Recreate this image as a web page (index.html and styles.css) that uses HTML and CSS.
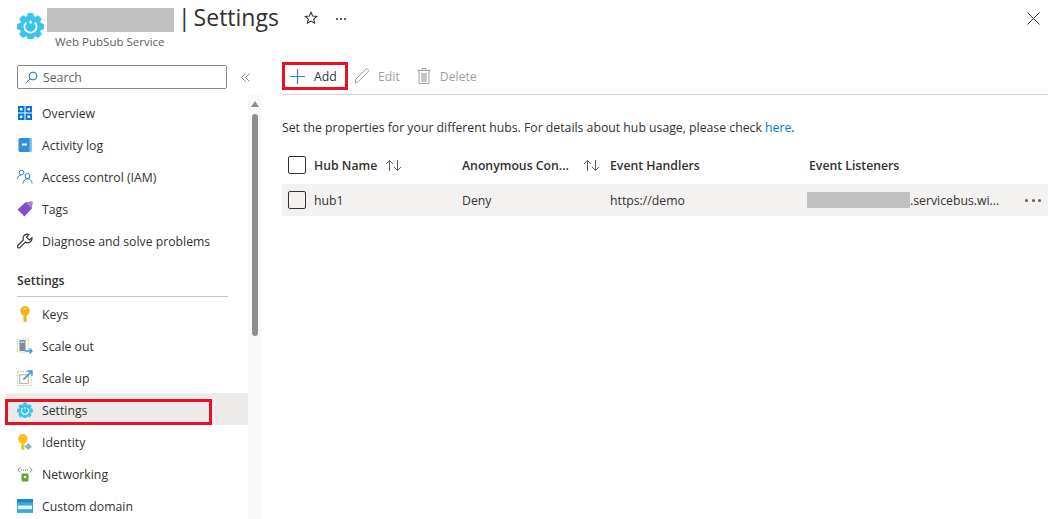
FILE: index.html
```html
<!DOCTYPE html>
<html lang="en">
<head>
  <meta charset="UTF-8" />
  <title>Settings - Web PubSub Service</title>
  <link rel="stylesheet" href="styles.css">
</head>
<body>
  <svg class="defs" width="0" height="0">
    <symbol id="gear" viewBox="0 0 28 28">
      <path fill="#37c5f0" stroke="#37c5f0" stroke-width="1" stroke-linejoin="round" d="M11.600 1.500h4.800l.7 3.100 2.100.9 2.700-1.700 3.400 3.400-1.700 2.700.9 2.100 3.100.7v4.800l-3.100.7-.9 2.100 1.700 2.700-3.400 3.400-2.700-1.700-2.100.9-.7 3.100h-4.800l-.7-3.100-2.100-.9-2.700 1.700-3.400-3.400 1.700-2.700-.9-2.100-3.100-.7v-4.800l3.100-.7.9-2.100-1.700-2.700 3.400-3.400 2.700 1.700 2.100-.9z"/>
      <path fill="none" stroke="#fff" stroke-width="2" stroke-linecap="round" d="M9 11.500a6.200 6.200 0 1 0 10 0"/>
      <path fill="#fff" d="M13 9h2.200v3H13z"/>
    </symbol>
    <symbol id="sort" viewBox="0 0 17 13">
      <path fill="none" stroke="#605e5c" stroke-width="1" d="M4.500 12V1.500M1 5l3.500-3.500L8 5M12.500 1v10.500M9 8l3.500 3.500L16 8"/>
    </symbol>
  </svg>

  <header class="top-bar">
    <svg class="res-icon"><use href="#gear"/></svg>
    <div class="title-block">
      <div class="title-line">
        <span class="redact redact-title"></span>
        <h1>| Settings</h1>
        <svg class="star" viewBox="0 0 14 14"><path fill="none" stroke="#323130" stroke-width="1.100" d="M7 1.300l1.700 3.800 4 .4-3 2.700.9 4L7 10.100l-3.600 2.100.9-4-3-2.700 4-.4z"/></svg>
        <span class="more-top"><i></i><i></i><i></i></span>
      </div>
      <div class="subtitle">Web PubSub Service</div>
    </div>
    <svg class="close" viewBox="0 0 13 13"><path stroke="#323130" stroke-width="1" d="M.5.5l12 12M12.500.5l-12 12"/></svg>
  </header>

  <div class="content">
    <aside class="sidebar">
      <div class="search-row">
        <div class="search">
          <svg class="search-icon" viewBox="0 0 13 13"><circle cx="8" cy="5" r="3.900" fill="none" stroke="#0078d4"/><path stroke="#0078d4" d="M5.200 7.800L.8 12.200"/></svg>
          <span>Search</span>
        </div>
        <svg class="collapse" viewBox="0 0 9 9"><path fill="none" stroke="#8a8886" d="M4.500.5l-4 4 4 4M8.500.5l-4 4 4 4"/></svg>
      </div>
      <div class="nav-wrap">
        <nav class="nav">
          <a class="nav-item">
            <svg class="ico-sm" viewBox="0 0 14 14"><path fill="#0078d4" d="M0 0h6.500v6.500H0zM7.500 0H14v6.500H7.500zM0 7.500h6.500V14H0zM7.500 7.500H14V14H7.500z"/><path fill="#fff" d="M2 2h2.500v2.500H2zM9.500 2H12v2.500H9.500zM2 9.500h2.500V12H2zM9.500 9.500H12V12H9.500z"/></svg>
            Overview
          </a>
          <a class="nav-item">
            <svg class="ico-sm" viewBox="0 0 14 14"><rect x=".5" width="13" height="14" rx="1.500" fill="#2f8fd8"/><rect x="11.500" width="2" height="14" fill="#7cc0ee"/><rect x="4" y="5.500" width="5" height="2" fill="#fff"/></svg>
            Activity log
          </a>
          <a class="nav-item">
            <svg viewBox="0 0 16 15"><g fill="none" stroke="#2f7fd0" stroke-width="1"><circle cx="4.500" cy="3" r="2.300"/><circle cx="10.500" cy="6.500" r="2.500"/><path d="M.5 9.500c0-2.500 1.500-3.800 3.500-3.800M6 14c0-3 2-4.700 4.500-4.700S15 11 15 14"/></g></svg>
            Access control (IAM)
          </a>
          <a class="nav-item">
            <svg viewBox="0 0 14 14"><path fill="#7f4fc9" d="M.5 7.500L7.500 1 13.500 .5 13 6.500 6.500 13.500z"/><path fill="#a67fe0" d="M7.500 1l6-.5-.5 6L9 3z"/></svg>
            Tags
          </a>
          <a class="nav-item">
            <svg viewBox="0 0 15 15"><path fill="none" stroke="#323130" stroke-width="1.100" d="M9.500 1a4 4 0 0 0-3.500 5.500L1 11.500c-.8.800-.8 1.500-.2 2.100s1.400.6 2.100-.1l5-5A4 4 0 0 0 14 4.500l-2.500 2-2.500-2.500 2-2.500c-.5-.3-1-.5-1.500-.5z"/></svg>
            Diagnose and solve problems
          </a>

          <div class="nav-heading">Settings</div>

          <a class="nav-item">
            <svg viewBox="0 0 14 15"><circle cx="7" cy="4.500" r="4.500" fill="#f9b21a"/><path fill="#f9b21a" d="M5.500 8h3v7h-1.500l-1.500-1z"/><rect x="5.500" y="1.800" width="3" height="1.500" rx=".7" fill="#fde49b"/></svg>
            Keys
          </a>
          <a class="nav-item">
            <svg viewBox="0 0 16 15"><rect x=".5" y=".5" width="11" height="13" fill="none" stroke="#b4dc92" stroke-dasharray="1.500 1"/><rect x="2.500" y="1.500" width="6" height="11" fill="#7d8a97"/><rect x="3.500" y="3" width="4" height="1.500" fill="#cfd6dc"/><path fill="none" stroke="#3b9be8" stroke-width="1.500" d="M8 12.500h7M12.500 10l2.500 2.500-2.500 2.500"/></svg>
            Scale out
          </a>
          <a class="nav-item">
            <svg viewBox="0 0 15 15"><rect x=".5" y="1.500" width="13" height="13" fill="none" stroke="#b4dc92" stroke-dasharray="1.500 1"/><rect x="2.500" y="4.500" width="8" height="8" fill="#fff" stroke="#a8b0b8"/><path fill="none" stroke="#3b9be8" stroke-width="1.500" d="M6 9l8-8M9.500 1H14v4.500"/></svg>
            Scale up
          </a>
          <a class="nav-item nav-active">
            <svg><use href="#gear"/></svg>
            Settings
            <span class="mark mark-nav"></span>
          </a>
          <a class="nav-item">
            <svg viewBox="0 0 14 15"><circle cx="5" cy="4.500" r="4.500" fill="#f9c21a"/><path fill="#f9c21a" d="M3.500 8h3v7H5l-1.500-1z"/><path fill="#7fb8dc" d="M10 8.500l3.500 3.500-3.500 3-3.500-3z"/></svg>
            Identity
          </a>
          <a class="nav-item">
            <svg viewBox="0 0 16 15"><path fill="none" stroke="#5ea0c8" d="M3.500 1L.8 3.500l2.700 2.500M12.500 1l2.700 2.500L12.500 6"/><path stroke="#5a8f2f" stroke-dasharray="1 1" d="M4 3.500h8"/><rect x="4.500" y="7" width="7" height="8" rx="1" fill="#5ea52b"/><circle cx="8" cy="10.500" r="1.300" fill="#fff"/></svg>
            Networking
          </a>
          <a class="nav-item">
            <svg viewBox="0 0 15 13"><rect width="15" height="13" fill="#3aa8e0"/><rect y="0" width="15" height="3" fill="#1f86c6"/><rect x="1" y="6" width="13" height="3.500" fill="#e4f4fc"/></svg>
            Custom domain
          </a>
        </nav>
        <div class="scrollbar">
          <span class="scroll-up"></span>
          <span class="scroll-thumb"></span>
        </div>
      </div>
    </aside>

    <main class="main">
      <div class="toolbar">
        <button class="tool tool-add">
          <svg viewBox="0 0 15 15"><path stroke="#2b88d8" stroke-width="1.200" d="M7.500 0v15M0 7.500h15"/></svg>
          Add
          <span class="mark mark-add"></span>
        </button>
        <button class="tool tool-off tool-edit">
          <svg viewBox="0 0 16 16"><path fill="none" stroke="#a19f9d" d="M1 15l1-4L11.500 1.500c.8-.8 1.800-.8 2.500-.1s.7 1.700-.1 2.500L4.500 13.500z"/></svg>
          Edit
        </button>
        <button class="tool tool-off tool-delete">
          <svg viewBox="0 0 14 16"><path fill="none" stroke="#a19f9d" d="M.5 2.500h13M5 2.500V.5h4v2M2 2.500v13h10v-13"/><path fill="#c8c6c4" d="M4 5h6v9H4z"/></svg>
          Delete
        </button>
      </div>

      <p class="intro">Set the properties for your different hubs. For details about hub usage, please check <a class="link">here</a>.</p>

      <div class="table">
        <div class="t-row t-head">
          <span class="check"></span>
          <span class="t-cell">Hub Name<svg class="sort"><use href="#sort"/></svg></span>
          <span class="t-cell">Anonymous Con...<svg class="sort sort-anon"><use href="#sort"/></svg></span>
          <span class="t-cell">Event Handlers</span>
          <span class="t-cell">Event Listeners</span>
        </div>
        <div class="t-row t-body">
          <span class="check"></span>
          <span class="t-cell">hub1</span>
          <span class="t-cell">Deny</span>
          <span class="t-cell">https://demo</span>
          <span class="t-cell t-listener"><span class="redact redact-host"></span>.servicebus.wi...</span>
          <span class="row-more"><i></i><i></i><i></i></span>
        </div>
      </div>
    </main>
  </div>
</body>
</html>
```

FILE: styles.css
```css
html, body {
  margin: 0;
  height: 519px;
  overflow: hidden;
}

body {
  font-family: "Open Sans", "Noto Sans", sans-serif;
  font-size: 12.25px;
  color: #323130;
  background-color: #fff;
}

.defs {
  position: absolute;
}

.redact {
  display: block;
  background-color: #c0c0c0;
}

.mark {
  position: absolute;
  border: 3px solid #e81123;
  box-sizing: border-box;
}

/* header */
.top-bar {
  display: flex;
  height: 65px;
  padding: 12px 21px 0 17px;
  box-sizing: border-box;
}

.res-icon {
  width: 27px;
  height: 27px;
  margin-right: 3px;
  flex: none;
}

.title-block {
  flex: 1;
  margin-top: -4px;
}

.title-line {
  display: flex;
  align-items: center;
  height: 24px;
}

.redact-title {
  width: 127px;
  height: 24px;
}

h1 {
  margin: -6px 0 0 4px;
  font-size: 23px;
  font-weight: 400;
  word-spacing: -3px;
  white-space: nowrap;
}

.star {
  width: 14px;
  height: 14px;
  margin: -4px 0 0 25px;
}

.more-top {
  display: flex;
  gap: 2px;
  margin: -3px 0 0 18px;
}

.more-top i {
  width: 2px;
  height: 2px;
  background-color: #605e5c;
}

.subtitle {
  margin: 2px 0 0 8px;
  font-size: 11.5px;
  color: #605e5c;
}

.close {
  width: 13px;
  height: 13px;
  flex: none;
}

/* left side */
.content {
  display: flex;
}

.sidebar {
  width: 262px;
  flex: none;
}

.search-row {
  display: flex;
  align-items: center;
  height: 24px;
  padding-left: 17px;
}

.search {
  display: flex;
  align-items: center;
  width: 210px;
  height: 24px;
  box-sizing: border-box;
  padding-left: 7px;
  border: 1px solid #8a8886;
  border-radius: 2px;
  color: #605e5c;
}

.search-icon {
  width: 13px;
  height: 13px;
  margin-right: 5px;
}

.collapse {
  width: 9px;
  height: 9px;
  margin-left: 14px;
}

.nav-wrap {
  display: flex;
  margin-top: 6px;
}

.nav {
  width: 243px;
  margin-left: 5px;
  padding-top: 1px;
}

.nav-item {
  position: relative;
  display: flex;
  align-items: center;
  height: 32px;
  box-sizing: border-box;
  padding: 2px 0 0 12px;
  white-space: nowrap;
}

.nav-item svg {
  width: 16px;
  height: 16px;
  margin-right: 9px;
  flex: none;
}

.nav-item .ico-sm {
  width: 14px;
  height: 14px;
  margin: 0 10px 0 1px;
}

.nav-active {
  background-color: #edebe9;
}

.mark-nav {
  left: 0;
  top: 6px;
  width: 207px;
  height: 26px;
}

.nav-heading {
  height: 24px;
  margin: 16px 20px 0 12px;
  border-bottom: 1px solid #c8c6c4;
  font-weight: 600;
  line-height: 17px;
}

.scrollbar {
  display: flex;
  flex-direction: column;
  align-items: center;
  width: 14px;
  height: 430px;
  background-color: #f9f9f9;
}

.scroll-up {
  margin-top: 6px;
  border: 4px solid transparent;
  border-top: 0;
  border-bottom: 6px solid #8f8f8f;
}

.scroll-thumb {
  width: 6px;
  height: 222px;
  margin-top: 7px;
  border-radius: 3px;
  background-color: #8f8f8f;
}

/* right side */
.main {
  width: 766px;
  margin-left: 20px;
  margin-top: -3px;
}

.toolbar {
  display: flex;
  align-items: center;
  height: 32px;
  border-bottom: 1px solid #d6d6d6;
}

.tool {
  position: relative;
  display: flex;
  align-items: center;
  height: 28px;
  margin-bottom: 4px;
  padding: 0;
  border: 0;
  background: none;
  color: #323130;
  font: inherit;
}

.tool-add {
  width: 66px;
  padding-left: 8px;
  box-sizing: border-box;
}

.tool-add svg {
  width: 15px;
  height: 15px;
  margin-right: 9px;
}

.mark-add {
  left: 0;
  top: 0;
  width: 66px;
  height: 28px;
}

.tool-off {
  color: #a19f9d;
}

.tool-edit {
  margin-left: 6px;
}

.tool-edit svg {
  width: 16px;
  height: 16px;
  margin-right: 8px;
}

.tool-delete {
  margin-left: 17px;
}

.tool-delete svg {
  width: 14px;
  height: 16px;
  margin-right: 9px;
}

.intro {
  margin: 24px 0 0;
  line-height: 17px;
}

.link {
  color: #0078d4;
}

.table {
  margin-top: 13px;
}

.t-row {
  display: grid;
  grid-template-columns: 32px 148px 148px 199px 1fr 36px;
  align-items: center;
  height: 32px;
  white-space: nowrap;
}

.t-head {
  margin-bottom: 3px;
  font-weight: 600;
}

.t-body {
  background-color: #f3f2f1;
}

.check {
  width: 18px;
  height: 18px;
  margin-left: 6px;
  box-sizing: border-box;
  border: 1px solid #323130;
  border-radius: 2px;
}

.t-cell {
  display: flex;
  align-items: center;
}

.sort {
  width: 17px;
  height: 13px;
  margin-left: 8px;
}

.sort-anon {
  margin-left: 14px;
}

.redact-host {
  width: 103px;
  height: 16px;
  margin-left: -2px;
}

.row-more {
  display: flex;
  gap: 3.500px;
  padding-left: 13px;
}

.row-more i {
  width: 3px;
  height: 3px;
  border-radius: 50%;
  background-color: #605e5c;
}
```
